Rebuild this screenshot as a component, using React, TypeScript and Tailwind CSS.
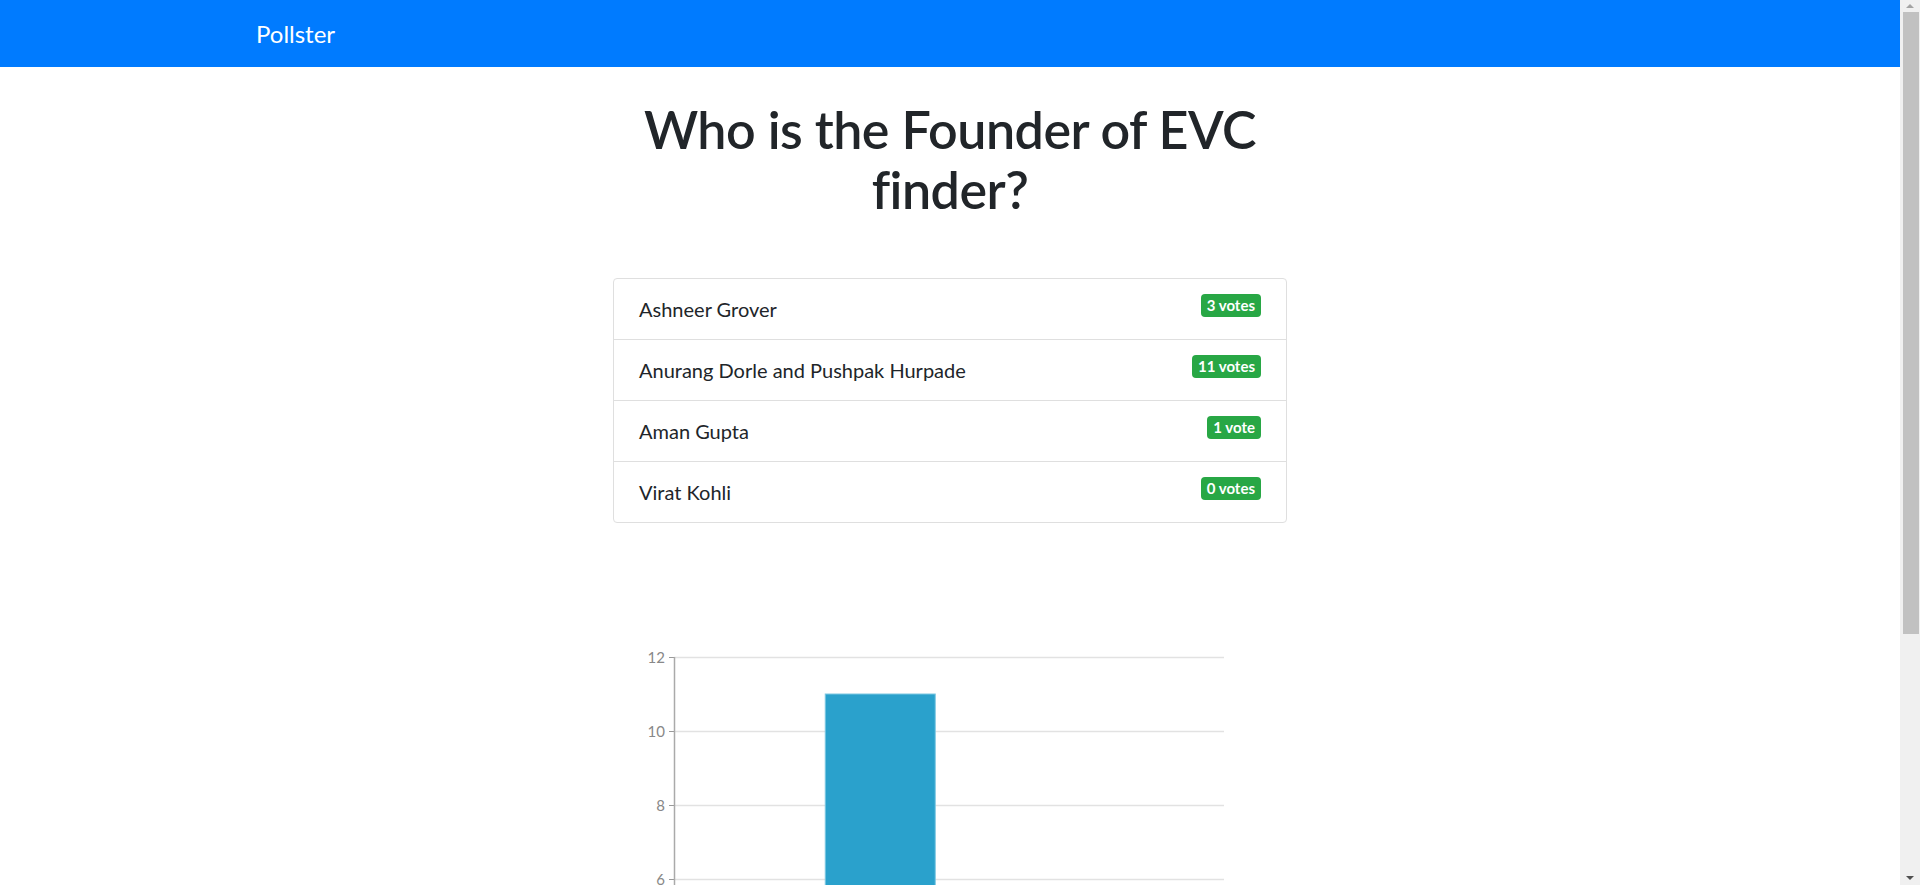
const options = [
  { name: "Ashneer Grover", votes: 3 },
  { name: "Anurang Dorle and Pushpak Hurpade", votes: 11 },
  { name: "Aman Gupta", votes: 1 },
  { name: "Virat Kohli", votes: 0 },
];

const FONT = '"Segoe UI", Lato, "Noto Sans", sans-serif';

const VoteChart = () => {
  const axisX = 61;
  const right = 611;
  const top = 35;
  const unit = 37;
  const max = 12;
  const slot = (right - axisX) / options.length;
  const ticks = [0, 2, 4, 6, 8, 10, 12];

  return (
    <svg width={674} height={560} className="block">
      {ticks.map((t) => {
        const y = top + (max - t) * unit + 0.5;
        return (
          <g key={t}>
            <line x1={axisX} x2={right} y1={y} y2={y} stroke="#e2e2e2" strokeWidth={1.5} />
            <line x1={axisX - 5} x2={axisX} y1={y} y2={y} stroke="#999" />
            <text x={axisX - 9} y={y + 5} textAnchor="end" fontSize={15} fill="#888" fontFamily={FONT}>
              {t}
            </text>
          </g>
        );
      })}
      <line x1={axisX + 0.5} x2={axisX + 0.5} y1={top} y2={top + max * unit + 1} stroke="#aaa" strokeWidth={1.5} />
      {options.map((o, i) => {
        const w = slot * 0.8;
        const x = axisX + slot * i + (slot - w) / 2;
        const h = o.votes * unit;
        return (
          <g key={o.name}>
            {h > 0 && (
              <rect x={x} y={top + (max - o.votes) * unit} width={w} height={h} fill="#2aa1cc" stroke="#7cc7e2" strokeWidth={1} />
            )}
            <text
              x={axisX + slot * i + slot / 2}
              y={top + max * unit + 22}
              textAnchor="middle"
              fontSize={13}
              fill="#888"
              fontFamily={FONT}
            >
              {o.name.length > 18 ? o.name.slice(0, 16) + "…" : o.name}
            </text>
          </g>
        );
      })}
    </svg>
  );
};

const Scrollbar = () => (
  <div className="sticky top-0 self-start h-[885px] w-[20px] shrink-0 bg-[#f0f0f0] flex flex-col items-center">
    <svg width={10} height={12} className="shrink-0">
      <path d="M1 8 L5 4 L9 8 Z" fill="#a3a3a3" />
    </svg>
    <div className="w-[16px] h-[622px] bg-[#c1c1c1] ml-[1px]" />
    <div className="flex-1" />
    <svg width={10} height={12} className="shrink-0">
      <path d="M1 3 L5 7 L9 3 Z" fill="#505050" />
    </svg>
  </div>
);

export default function App() {
  return (
    <div className="flex bg-white text-[#212529]" style={{ fontFamily: FONT }}>
      <div className="flex-1 min-w-0">
        <nav className="h-[67px] bg-[#007bff] flex items-center pl-[256px]">
          <span className="text-white text-[24px] leading-none">Pollster</span>
        </nav>

        <div className="w-[674px] mx-auto pb-10">
          <h1 className="mt-[32px] text-center text-[52px] leading-[60px] font-semibold tracking-[-0.5px]">
            Who is the Founder of EVC finder?
          </h1>

          <ul className="mt-[59px] border border-[#dfdfdf] rounded">
            {options.map((o, i) => (
              <li
                key={o.name}
                className={`flex justify-between items-start px-[25px] py-[15px] text-[20px] leading-[30px] ${
                  i > 0 ? "border-t border-[#dfdfdf]" : ""
                }`}
              >
                <span>{o.name}</span>
                <span className="bg-[#28a745] text-white text-[15px] font-bold leading-none px-[6px] py-[3.75px] rounded">
                  {o.votes} {o.votes === 1 ? "vote" : "votes"}
                </span>
              </li>
            ))}
          </ul>

          <div className="mt-[99px]">
            <VoteChart />
          </div>
        </div>
      </div>
      <Scrollbar />
    </div>
  );
}
